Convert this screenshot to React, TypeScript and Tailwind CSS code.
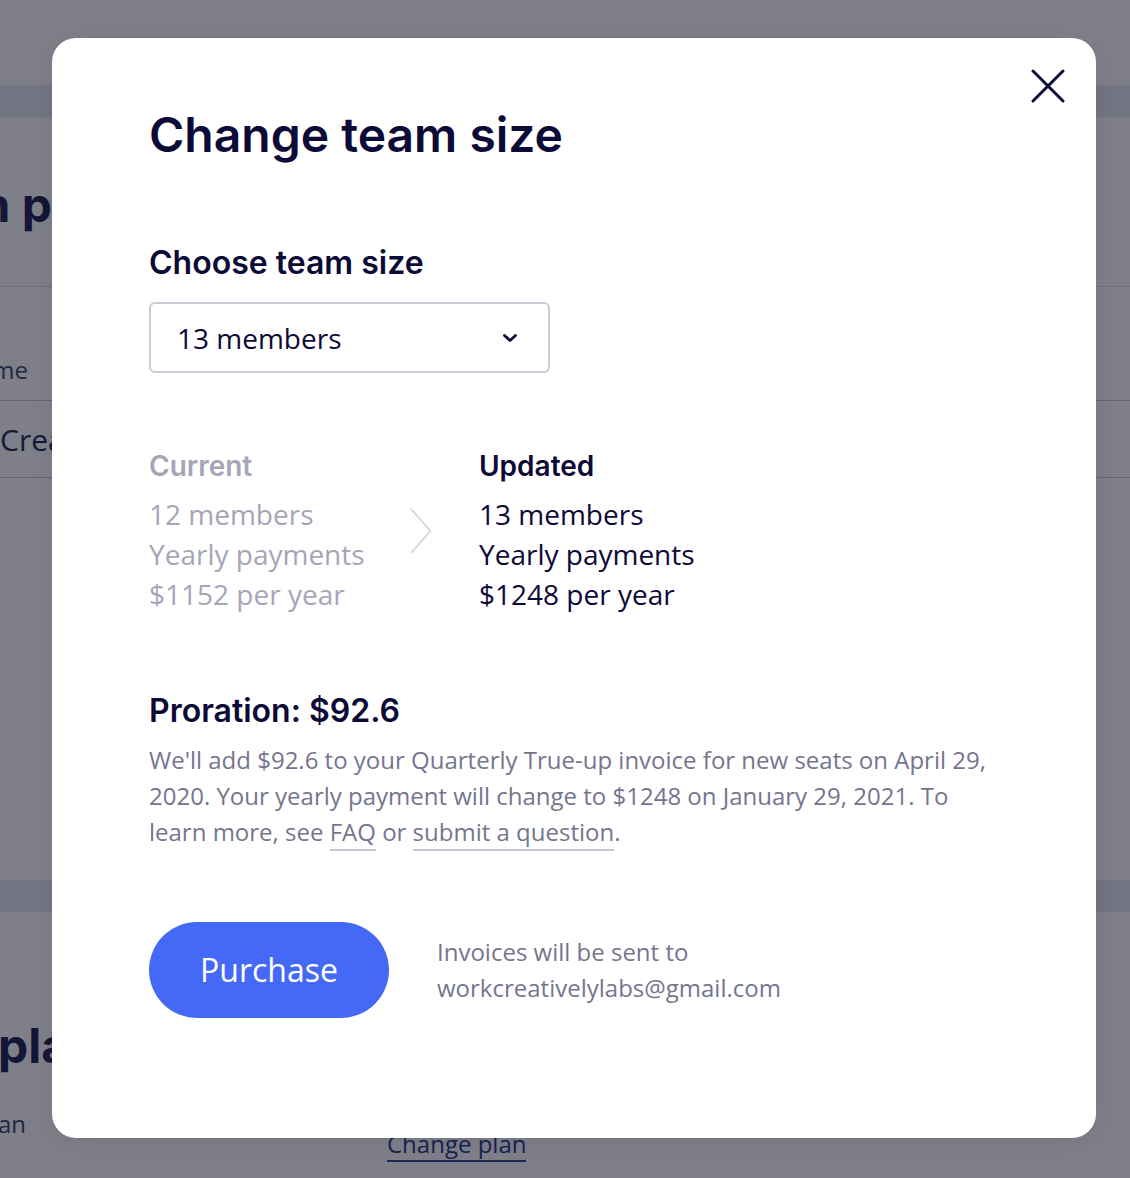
import React from "react";

const navy = "text-[#0c0a36]";

function CloseIcon() {
  return (
    <svg width="34" height="34" viewBox="0 0 34 34" fill="none" aria-hidden>
      <path d="M2 2L32 32M32 2L2 32" stroke="#0c0a36" strokeWidth="3" strokeLinecap="round" />
    </svg>
  );
}

function Chevron() {
  return (
    <svg width="16" height="10" viewBox="0 0 16 10" fill="none" aria-hidden>
      <path d="M2.5 2.5L8 7.5L13.5 2.5" stroke="#0c0a36" strokeWidth="2.8" strokeLinecap="round" strokeLinejoin="round" />
    </svg>
  );
}

function ArrowRight() {
  return (
    <svg width="22" height="46" viewBox="0 0 22 46" fill="none" aria-hidden>
      <path d="M1 1L20.5 23L1 45" stroke="#cfcfd8" strokeWidth="1.5" />
    </svg>
  );
}

// the page that sits behind the dimmed overlay
function BackgroundPage() {
  return (
    <div className="font-['Open_Sans',sans-serif]">
      <div className="h-[85px] bg-white" />
      <div className="h-[32px] bg-[#e8e9ef]" />
      <div className="flex h-[170px] items-center border-b border-[#dcdde4] pt-[6px]">
        <div className="flex w-[52px] justify-end overflow-hidden whitespace-nowrap">
          <span className="font-['Inter',sans-serif] text-[48px] font-bold text-[#17164a]">Subscription p</span>
        </div>
      </div>
      <div className="flex h-[114px] items-end border-b border-[#c9cad4] pb-[12px]">
        <div className="flex w-[52px] justify-end overflow-hidden whitespace-nowrap pr-[24px]">
          <span className="text-[24px] text-[#3a3a5c]">Name</span>
        </div>
      </div>
      <div className="flex h-[77px] items-center border-b border-[#c9cad4]">
        <div className="flex w-[52px] overflow-hidden whitespace-nowrap">
          <span className="text-[30px] text-[#1c1b4a]">Creatively</span>
        </div>
      </div>
      <div className="h-[402px] bg-white" />
      <div className="h-[32px] bg-[#e8e9ef]" />
      <div className="flex h-[170px] items-end">
        <div className="flex w-[52px] overflow-hidden whitespace-nowrap">
          <span className="-ml-[2px] font-['Inter',sans-serif] text-[48px] font-bold text-[#17164a]">plan</span>
        </div>
      </div>
      <div className="flex h-[96px] items-start pt-[24px]">
        <div className="flex w-[52px] justify-end overflow-hidden whitespace-nowrap pr-[26px]">
          <span className="text-[24px] text-[#3a3a5c]">Plan</span>
        </div>
        <div className="ml-[335px] mt-[20px]">
          <span className="border-b-2 border-[#2f3a8c] text-[24px] text-[#24307f]">Change plan</span>
        </div>
      </div>
    </div>
  );
}

export default function App() {
  return (
    <div className="relative h-[1178px] w-full overflow-hidden bg-white">
      <BackgroundPage />

      {/* overlay + dialog */}
      <div className="absolute inset-0 bg-[rgba(20,22,40,0.55)] pl-[52px] pt-[38px]">
        <div className="relative h-[1100px] w-[1044px] rounded-[24px] bg-white pl-[97px] pt-[69px] shadow-[0_4px_24px_rgba(0,0,0,0.08)]">
          <button className="absolute right-[31px] top-[31px]" aria-label="Close">
            <CloseIcon />
          </button>

          <h1 className={`font-['Inter',sans-serif] text-[48px] font-semibold leading-[56px] ${navy}`}>
            Change team size
          </h1>

          <h2 className={`mt-[82px] font-['Inter',sans-serif] text-[32px] font-semibold leading-[36px] ${navy}`}>
            Choose team size
          </h2>

          <div className="mt-[21px] flex h-[71px] w-[401px] items-center justify-between rounded-[6px] border-2 border-[#cbcad6] pl-[26px] pr-[30px]">
            <span className={`font-['Open_Sans',sans-serif] text-[28px] ${navy}`}>13 members</span>
            <Chevron />
          </div>

          <div className="mt-[75px] flex items-start font-['Open_Sans',sans-serif]">
            <div className="w-[261px]">
              <div className="font-['Inter',sans-serif] text-[28px] font-semibold leading-[36px] text-[#a6a5b8]">Current</div>
              <div className="mt-[10px] text-[28px] leading-[40px] text-[#a6a5b8]">
                <div>12 members</div>
                <div>Yearly payments</div>
                <div>$1152 per year</div>
              </div>
            </div>
            <div className="pt-[60px]">
              <ArrowRight />
            </div>
            <div className="ml-[47px]">
              <div className={`font-['Inter',sans-serif] text-[28px] font-semibold leading-[36px] ${navy}`}>Updated</div>
              <div className={`mt-[10px] text-[28px] leading-[40px] ${navy}`}>
                <div>13 members</div>
                <div>Yearly payments</div>
                <div>$1248 per year</div>
              </div>
            </div>
          </div>

          <h3 className={`mt-[77px] font-['Inter',sans-serif] text-[32px] font-semibold leading-[40px] ${navy}`}>
            Proration: $92.6
          </h3>
          <p className="mt-[11px] max-w-[850px] font-['Open_Sans',sans-serif] text-[24px] leading-[36px] text-[#76758f]">
            We'll add $92.6 to your Quarterly True-up invoice for new seats on April 29, 2020. Your yearly payment will
            change to $1248 on January 29, 2021. To learn more, see{" "}
            <a className="border-b-2 border-[#c7c6d3] pb-[1px]">FAQ</a> or{" "}
            <a className="border-b-2 border-[#c7c6d3] pb-[1px]">submit a question</a>.
          </p>

          <div className="mt-[72px] flex items-center gap-[48px] font-['Open_Sans',sans-serif]">
            <button className="h-[96px] w-[240px] rounded-full bg-[#4469f6] text-[32px] text-white">Purchase</button>
            <div className="text-[24px] leading-[36px] text-[#76758f]">
              <div>Invoices will be sent to</div>
              <div>workcreativelylabs@gmail.com</div>
            </div>
          </div>
        </div>
      </div>
    </div>
  );
}
